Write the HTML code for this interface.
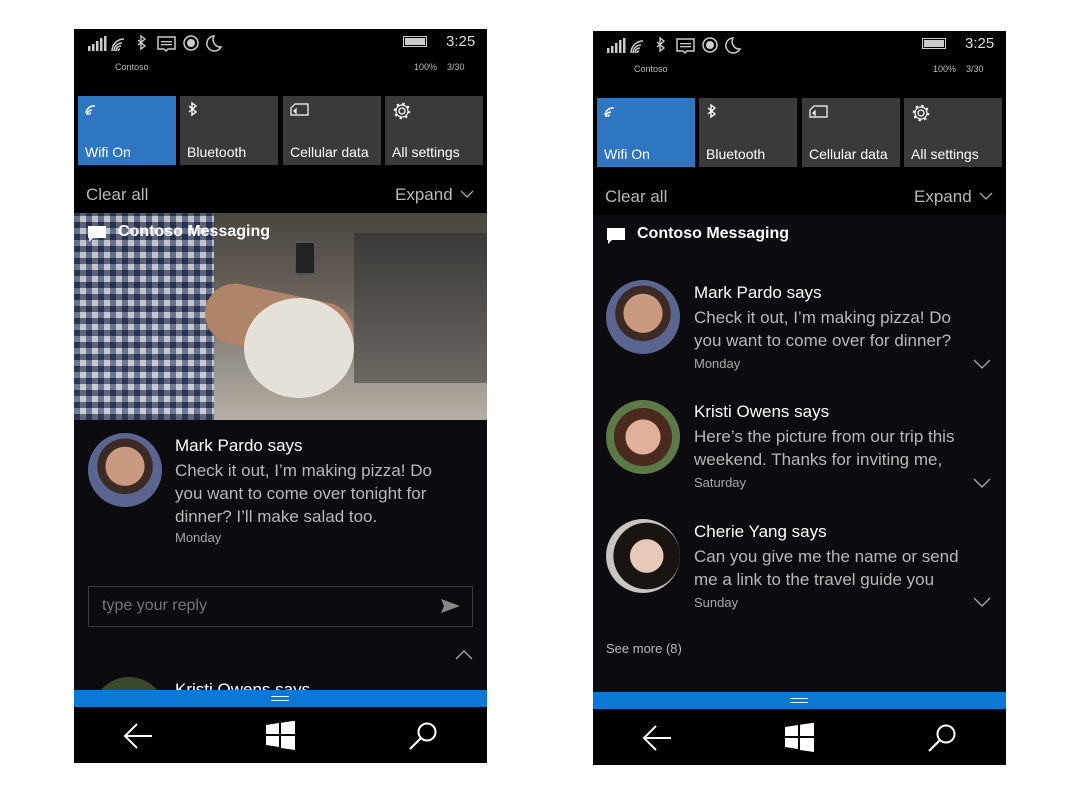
<!DOCTYPE html>
<html><head><meta charset="utf-8"><style>
*{margin:0;padding:0;box-sizing:border-box}
body{width:1082px;height:789px;background:#fff;position:relative;overflow:hidden;font-family:"Liberation Sans",sans-serif}
.ph{position:absolute;width:413px;height:734px;background:#0c0c10;overflow:hidden}
.a{position:absolute;white-space:nowrap}
.tile{position:absolute;top:67px;width:98px;height:69px;background:#3a3a3a;color:#fff;font-size:14px}
.tile span{position:absolute;left:7px;bottom:5px}
.tile svg{position:absolute;left:7px;top:5px}
.t{color:#fff;font-size:17px}
.g{color:#b8b8b8;font-size:17px}
.d{color:#a8a8a8;font-size:13px}
.av{position:absolute;width:74px;height:74px;border-radius:50%}
.blue{position:absolute;left:0;width:413px;height:17px;background:#0a78d4}
.nav{position:absolute;left:0;width:413px;height:56px;background:#000}
</style></head><body>

<!-- LEFT PHONE -->
<div class="ph" style="left:74px;top:29px">
 <div style="position:absolute;left:0;top:0;width:413px;height:184px;background:#000"></div>
 <svg class="a" style="left:14px;top:5px" width="140" height="18" viewBox="0 0 140 18" fill="#ccc">
  <rect x="0" y="12" width="2.5" height="5"/><rect x="4" y="10" width="2.5" height="7"/><rect x="8" y="7" width="2.5" height="10"/><rect x="12" y="4" width="2.5" height="13"/><rect x="16" y="2" width="2.5" height="15"/>
  <path d="M30 17a2 2 0 0 1 2-2M28 17a5 5 0 0 1 5-5M26 17a8 8 0 0 1 8-8M24 17a12 12 0 0 1 12-12" stroke="#ccc" stroke-width="1.5" fill="none"/>
  <path d="M50 6l7 6-4 3V2l4 3-7 6" stroke="#ccc" stroke-width="1.4" fill="none"/>
  <path d="M70 3h17v12h-7l-2 2-2-2h-6z" stroke="#ccc" stroke-width="1.5" fill="none"/><rect x="73" y="7" width="11" height="1.3"/><rect x="73" y="10" width="11" height="1.3"/>
  <circle cx="103" cy="9" r="7" stroke="#ccc" stroke-width="1.5" fill="none"/><circle cx="103" cy="9" r="4"/>
  <path d="M126 2a7.5 7.5 0 1 0 7 11 7.5 7.5 0 0 1-7-11z" stroke="#ccc" stroke-width="1.5" fill="none"/>
 </svg>
 <div class="a" style="left:329px;top:7px;width:24px;height:11px;border:1.5px solid #ccc;padding:1px"><div style="width:100%;height:100%;background:#ccc"></div></div>
 <div class="a" style="left:372px;top:4px;color:#ddd;font-size:15px">3:25</div>
 <div class="a" style="left:41px;top:33px;color:#bbb;font-size:9px">Contoso</div>
 <div class="a" style="left:340px;top:33px;color:#bbb;font-size:9px">100%&nbsp;&nbsp;&nbsp;&nbsp;3/30</div>
 <div class="tile" style="left:4px;background:#2e75c2"><svg width="16" height="16" viewBox="0 0 16 16"><path d="M4 14a2 2 0 0 1 2-2M2 14a5 5 0 0 1 5-5M1 12a8 8 0 0 1 9-7" stroke="#fff" stroke-width="1.5" fill="none"/></svg><span>Wifi On</span></div>
 <div class="tile" style="left:106px"><svg width="14" height="16" viewBox="0 0 14 16"><path d="M2 5l7 6-4 3V2l4 3-7 6" stroke="#fff" stroke-width="1.4" fill="none"/></svg><span>Bluetooth</span></div>
 <div class="tile" style="left:209px"><svg width="20" height="16" viewBox="0 0 20 16"><path d="M5 3h13v11H1V7z M4 10l2-2v4z" stroke="#fff" stroke-width="1.2" fill="none"/></svg><span>Cellular data</span></div>
 <div class="tile" style="left:311px"><svg width="20" height="20" viewBox="0 0 20 20"><circle cx="10" cy="10" r="3" stroke="#fff" stroke-width="1.3" fill="none"/><circle cx="10" cy="10" r="7" stroke="#fff" stroke-width="2.5" stroke-dasharray="2.2 3.3" fill="none"/><circle cx="10" cy="10" r="6" stroke="#fff" stroke-width="1.2" fill="none"/></svg><span>All settings</span></div>
 <div class="a g" style="left:12px;top:156px">Clear all</div>
 <div class="a g" style="left:321px;top:156px">Expand</div>
 <svg class="a" style="left:386px;top:161px" width="14" height="8"><path d="M1 1l6 6 6-6" stroke="#aaa" stroke-width="1.3" fill="none"/></svg>
 <!-- photo -->
 <div class="a" style="left:0;top:184px;width:413px;height:207px;background:linear-gradient(180deg,#4a4640 0%,#6a625a 40%,#9a958c 75%,#b5aea5 100%)">
  <div class="a" style="left:0;top:0;width:140px;height:207px;background:repeating-linear-gradient(90deg,#2c3f66 0 6px,#c8ccd6 6px 12px),#445;opacity:.85"></div>
  <div class="a" style="left:0;top:0;width:140px;height:207px;background:repeating-linear-gradient(0deg,rgba(30,40,70,.6) 0 6px,rgba(220,220,230,.3) 6px 12px)"></div>
  <div class="a" style="left:130px;top:80px;width:150px;height:60px;border-radius:30px;background:#b08468;transform:rotate(12deg)"></div>
  <div class="a" style="left:170px;top:85px;width:110px;height:100px;border-radius:50%;background:#e6e1d8"></div>
  <div class="a" style="left:280px;top:20px;width:133px;height:150px;background:linear-gradient(180deg,#3b3a38,#6c6862)"></div>
  <div class="a" style="left:220px;top:28px;width:22px;height:34px;border-radius:3px;background:#222;border:2px solid #555"></div>
 </div>
 <svg class="a" style="left:14px;top:197px" width="18" height="16"><path d="M0 0h18v12H5l-4 4v-4H0z" fill="#fff"/></svg>
 <div class="a t" style="left:44px;top:194px;font-weight:bold;font-size:16px">Contoso Messaging</div>
 <div class="av" style="left:14px;top:404px;background:radial-gradient(circle at 50% 45%,#c99a80 0 35%,#3c2a24 36% 50%,#5a6690 51%)"></div>
 <div class="a t" style="left:101px;top:407px">Mark Pardo says</div>
 <div class="a g" style="left:101px;top:430px;line-height:23px">Check it out, I’m making pizza! Do<br>you want to come over tonight for<br>dinner? I’ll make salad too.</div>
 <div class="a d" style="left:101px;top:501px">Monday</div>
 <div class="a" style="left:14px;top:557px;width:385px;height:41px;border:1.5px solid #3c3c40"></div>
 <div class="a" style="left:28px;top:568px;color:#777;font-size:16px">type your reply</div>
 <svg class="a" style="left:367px;top:570px" width="19" height="14"><path d="M0 0l19 7L0 14l3-7z" fill="#888"/></svg>
 <svg class="a" style="left:381px;top:621px" width="18" height="10"><path d="M1 9l8-8 8 8" stroke="#aaa" stroke-width="1.3" fill="none"/></svg>
 <div class="av" style="left:18px;top:648px;background:#3a4a2a"></div>
 <div class="a t" style="left:101px;top:651px">Kristi Owens says</div>
 <div class="blue" style="top:661px"><div class="a" style="left:197px;top:6px;width:18px;height:5px;border-top:1.5px solid #cfe;border-bottom:1.5px solid #cfe"></div></div>
 <div class="nav" style="top:678px">
  <svg class="a" style="left:49px;top:16px" width="30" height="26"><path d="M29 13H2M14 1L2 13l12 12" stroke="#fff" stroke-width="2" fill="none"/></svg>
  <svg class="a" style="left:192px;top:14px" width="29" height="29"><path d="M0 4l13-2v11H0zM15 1.7l14-2V13H15zM0 15h13v11L0 24zM15 15h14v14l-14-2z" fill="#fff"/></svg>
  <svg class="a" style="left:334px;top:14px" width="30" height="30"><circle cx="19" cy="11" r="8.5" stroke="#fff" stroke-width="2" fill="none"/><path d="M13 17L2 28" stroke="#fff" stroke-width="2.2"/></svg>
 </div>
</div>

<!-- RIGHT PHONE -->
<div class="ph" style="left:593px;top:31px">
 <div style="position:absolute;left:0;top:0;width:413px;height:184px;background:#000"></div>
 <svg class="a" style="left:14px;top:5px" width="140" height="18" viewBox="0 0 140 18" fill="#ccc">
  <rect x="0" y="12" width="2.5" height="5"/><rect x="4" y="10" width="2.5" height="7"/><rect x="8" y="7" width="2.5" height="10"/><rect x="12" y="4" width="2.5" height="13"/><rect x="16" y="2" width="2.5" height="15"/>
  <path d="M30 17a2 2 0 0 1 2-2M28 17a5 5 0 0 1 5-5M26 17a8 8 0 0 1 8-8M24 17a12 12 0 0 1 12-12" stroke="#ccc" stroke-width="1.5" fill="none"/>
  <path d="M50 6l7 6-4 3V2l4 3-7 6" stroke="#ccc" stroke-width="1.4" fill="none"/>
  <path d="M70 3h17v12h-7l-2 2-2-2h-6z" stroke="#ccc" stroke-width="1.5" fill="none"/><rect x="73" y="7" width="11" height="1.3"/><rect x="73" y="10" width="11" height="1.3"/>
  <circle cx="103" cy="9" r="7" stroke="#ccc" stroke-width="1.5" fill="none"/><circle cx="103" cy="9" r="4"/>
  <path d="M126 2a7.5 7.5 0 1 0 7 11 7.5 7.5 0 0 1-7-11z" stroke="#ccc" stroke-width="1.5" fill="none"/>
 </svg>
 <div class="a" style="left:329px;top:7px;width:24px;height:11px;border:1.5px solid #ccc;padding:1px"><div style="width:100%;height:100%;background:#ccc"></div></div>
 <div class="a" style="left:372px;top:4px;color:#ddd;font-size:15px">3:25</div>
 <div class="a" style="left:41px;top:33px;color:#bbb;font-size:9px">Contoso</div>
 <div class="a" style="left:340px;top:33px;color:#bbb;font-size:9px">100%&nbsp;&nbsp;&nbsp;&nbsp;3/30</div>
 <div class="tile" style="left:4px;background:#2e75c2"><svg width="16" height="16" viewBox="0 0 16 16"><path d="M4 14a2 2 0 0 1 2-2M2 14a5 5 0 0 1 5-5M1 12a8 8 0 0 1 9-7" stroke="#fff" stroke-width="1.5" fill="none"/></svg><span>Wifi On</span></div>
 <div class="tile" style="left:106px"><svg width="14" height="16" viewBox="0 0 14 16"><path d="M2 5l7 6-4 3V2l4 3-7 6" stroke="#fff" stroke-width="1.4" fill="none"/></svg><span>Bluetooth</span></div>
 <div class="tile" style="left:209px"><svg width="20" height="16" viewBox="0 0 20 16"><path d="M5 3h13v11H1V7z M4 10l2-2v4z" stroke="#fff" stroke-width="1.2" fill="none"/></svg><span>Cellular data</span></div>
 <div class="tile" style="left:311px"><svg width="20" height="20" viewBox="0 0 20 20"><circle cx="10" cy="10" r="3" stroke="#fff" stroke-width="1.3" fill="none"/><circle cx="10" cy="10" r="7" stroke="#fff" stroke-width="2.5" stroke-dasharray="2.2 3.3" fill="none"/><circle cx="10" cy="10" r="6" stroke="#fff" stroke-width="1.2" fill="none"/></svg><span>All settings</span></div>
 <div class="a g" style="left:12px;top:156px">Clear all</div>
 <div class="a g" style="left:321px;top:156px">Expand</div>
 <svg class="a" style="left:386px;top:161px" width="14" height="8"><path d="M1 1l6 6 6-6" stroke="#aaa" stroke-width="1.3" fill="none"/></svg>
 <svg class="a" style="left:14px;top:197px" width="18" height="16"><path d="M0 0h18v12H5l-4 4v-4H0z" fill="#fff"/></svg>
 <div class="a t" style="left:44px;top:194px;font-weight:bold;font-size:16px">Contoso Messaging</div>

 <div class="av" style="left:13px;top:249px;background:radial-gradient(circle at 50% 45%,#c99a80 0 35%,#3c2a24 36% 50%,#5a6690 51%)"></div>
 <div class="a t" style="left:101px;top:252px">Mark Pardo says</div>
 <div class="a g" style="left:101px;top:275px;line-height:23px">Check it out, I’m making pizza! Do<br>you want to come over for dinner?</div>
 <div class="a d" style="left:101px;top:325px">Monday</div>
 <svg class="a" style="left:380px;top:328px" width="18" height="10"><path d="M1 1l8 8 8-8" stroke="#aaa" stroke-width="1.3" fill="none"/></svg>

 <div class="av" style="left:13px;top:369px;background:radial-gradient(circle at 50% 50%,#e0b09a 0 33%,#4a2a1e 34% 55%,#5c7a48 56%)"></div>
 <div class="a t" style="left:101px;top:371px">Kristi Owens says</div>
 <div class="a g" style="left:101px;top:394px;line-height:23px">Here’s the picture from our trip this<br>weekend. Thanks for inviting me,</div>
 <div class="a d" style="left:101px;top:444px">Saturday</div>
 <svg class="a" style="left:380px;top:447px" width="18" height="10"><path d="M1 1l8 8 8-8" stroke="#aaa" stroke-width="1.3" fill="none"/></svg>

 <div class="av" style="left:13px;top:488px;background:radial-gradient(circle at 55% 50%,#e8c8b8 0 30%,#1a1410 31% 60%,#c8c4c0 61%)"></div>
 <div class="a t" style="left:101px;top:491px">Cherie Yang says</div>
 <div class="a g" style="left:101px;top:514px;line-height:23px">Can you give me the name or send<br>me a link to the travel guide you</div>
 <div class="a d" style="left:101px;top:564px">Sunday</div>
 <svg class="a" style="left:380px;top:566px" width="18" height="10"><path d="M1 1l8 8 8-8" stroke="#aaa" stroke-width="1.3" fill="none"/></svg>

 <div class="a" style="left:13px;top:610px;color:#bbb;font-size:13px">See more (8)</div>
 <div class="blue" style="top:661px"><div class="a" style="left:197px;top:6px;width:18px;height:5px;border-top:1.5px solid #cfe;border-bottom:1.5px solid #cfe"></div></div>
 <div class="nav" style="top:678px">
  <svg class="a" style="left:49px;top:16px" width="30" height="26"><path d="M29 13H2M14 1L2 13l12 12" stroke="#fff" stroke-width="2" fill="none"/></svg>
  <svg class="a" style="left:192px;top:14px" width="29" height="29"><path d="M0 4l13-2v11H0zM15 1.7l14-2V13H15zM0 15h13v11L0 24zM15 15h14v14l-14-2z" fill="#fff"/></svg>
  <svg class="a" style="left:334px;top:14px" width="30" height="30"><circle cx="19" cy="11" r="8.5" stroke="#fff" stroke-width="2" fill="none"/><path d="M13 17L2 28" stroke="#fff" stroke-width="2.2"/></svg>
 </div>
</div>
</body></html>
